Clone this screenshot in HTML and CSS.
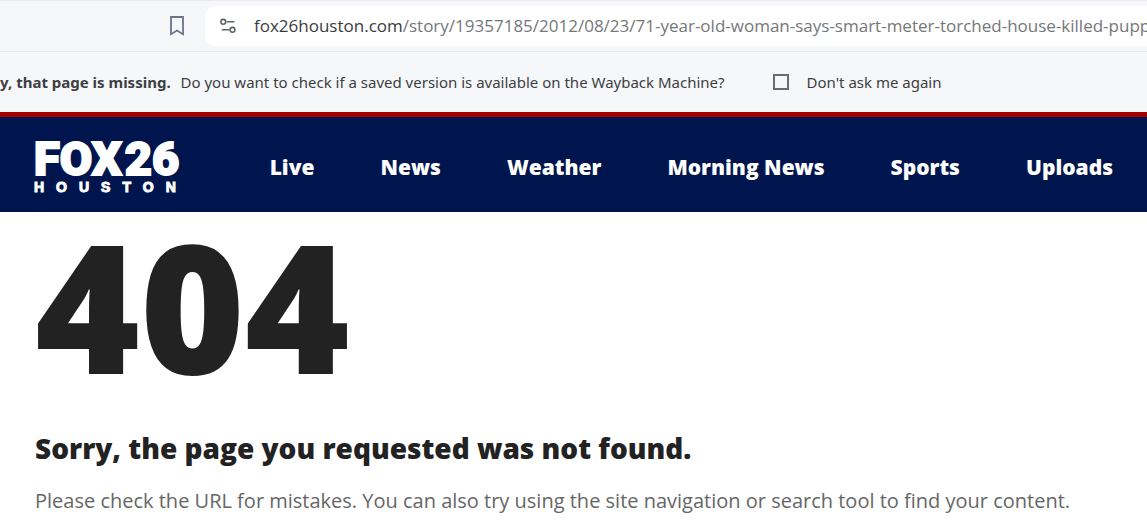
FILE: index.html
```html
<!DOCTYPE html>
<html lang="en">
<head>
    <meta charset="UTF-8" />
    <meta name="viewport" content="width=device-width, initial-scale=1" />
    <title>Page Not Found | FOX 26 Houston</title>
    <link rel="stylesheet" href="styles.css">
</head>
<body>

    <!-- Browser toolbar -->
    <div class="toolbar">
        <button class="icon-btn" type="button" aria-label="Bookmark this page">
            <svg width="14" height="20" viewBox="0 0 14 20" fill="none" stroke="#6b7488" stroke-width="1.8">
                <path d="M1 1h12v17.2l-6-3.6-6 3.6z" />
            </svg>
        </button>
        <div class="address-bar">
            <button class="icon-btn" type="button" aria-label="View site information">
                <svg width="16" height="16" viewBox="0 0 16 16" fill="none" stroke="#5f6368" stroke-width="1.6">
                    <circle cx="3.3" cy="3.8" r="2.4" />
                    <path d="M6.8 3.8H14.5M1.8 11.8H9.4" />
                    <circle cx="12.5" cy="11.8" r="2.4" />
                </svg>
            </button>
            <a href="#" class="url"><span class="domain">fox26houston.com</span>/story/19357185/2012/08/23/71-year-old-woman-says-smart-meter-torched-house-killed-pupp...</a>
        </div>
    </div>

    <!-- Wayback Machine prompt -->
    <div class="infobar">
        <p><strong>y, that page is missing.</strong> Do you want to check if a saved version is available on the Wayback Machine?</p>
        <input type="checkbox" id="dontAsk">
        <label for="dontAsk">Don't ask me again</label>
    </div>

    <header class="site-header">
        <a href="#" class="logo" aria-label="FOX 26 Houston">
            <span class="logo-main"><span>FOX</span><span>26</span></span>
            <span class="logo-city">HOUSTON</span>
        </a>
        <nav class="main-nav">
            <a href="#">Live</a>
            <a href="#">News</a>
            <a href="#">Weather</a>
            <a href="#">Morning News</a>
            <a href="#">Sports</a>
            <a href="#">Uploads</a>
        </nav>
    </header>

    <main class="error-page">
        <h1>404</h1>
        <h2>Sorry, the page you requested was not found.</h2>
        <p>Please check the URL for mistakes. You can also try using the site navigation or search tool to find your content.</p>
    </main>

</body>
</html>
```
FILE: styles.css
```css
* {
    margin: 0;
    padding: 0;
    box-sizing: border-box;
}
body {
    background: #ffffff;
    color: #222222;
    font-family: 'Open Sans', sans-serif;
    overflow: hidden;
}
a {
    color: inherit;
    text-decoration: none;
}

/* Browser toolbar */
.toolbar {
    display: flex;
    align-items: center;
    gap: 20px;
    padding: 5px 0 5px 169px;
    background: #f6f7f9;
    border-top: 1px solid #e9ebee;
    border-bottom: 1px solid #e9ebee;
}
.icon-btn {
    display: flex;
    border: none;
    background: none;
    flex-shrink: 0;
    cursor: pointer;
}
.toolbar > .icon-btn {
    padding: 0 1px;
}
.address-bar {
    flex: 1;
    min-width: 0;
    height: 40px;
    display: flex;
    align-items: center;
    gap: 18px;
    padding-left: 15px;
    background: #ffffff;
    border-radius: 10px 0 0 10px;
}
.url {
    color: #75777a;
    font-size: 17px;
    line-height: 24px;
    padding-bottom: 1px;
    white-space: nowrap;
}
.domain {
    color: #3a3c3f;
}

/* Info bar */
.infobar {
    display: flex;
    align-items: center;
    height: 60px;
    background: #f6f7f9;
    color: #3c3f43;
    font-family: 'Noto Sans', sans-serif;
    font-size: 15px;
    white-space: nowrap;
}
.infobar strong {
    margin-right: 6px;
}
.infobar input {
    appearance: none;
    width: 16px;
    height: 16px;
    margin: 0 18px 0 48px;
    border: 2px solid #6a6b70;
    flex-shrink: 0;
}

/* Site header */
.site-header {
    display: flex;
    justify-content: space-between;
    align-items: center;
    height: 100px;
    padding: 0 34px;
    background: #00144d;
    border-top: 5px solid #a60000;
    color: #ffffff;
}
.logo {
    display: flex;
    flex-direction: column;
    padding-top: 4px;
    font-family: 'Roboto', sans-serif;
    font-weight: 900;
}
.logo-main {
    display: flex;
    gap: 3px;
    font-size: 47px;
    line-height: 40px;
    -webkit-text-stroke: 2px #ffffff;
}
.logo-city {
    font-family: 'Liberation Sans', sans-serif;
    font-size: 14px;
    line-height: 16px;
    letter-spacing: 12px;
    -webkit-text-stroke: 1px #ffffff;
}
.main-nav {
    display: flex;
    gap: 66px;
    padding-top: 4px;
    font-size: 21px;
    font-weight: 800;
    white-space: nowrap;
}

/* 404 content */
.error-page {
    padding: 0 35px;
}
.error-page h1 {
    font-size: 179px;
    font-weight: 800;
    line-height: 186px;
}
.error-page h2 {
    margin-top: 30px;
    font-size: 28px;
    font-weight: 800;
    line-height: 40px;
}
.error-page p {
    margin-top: 18px;
    color: #666666;
    font-size: 20px;
    line-height: 30px;
}
```
